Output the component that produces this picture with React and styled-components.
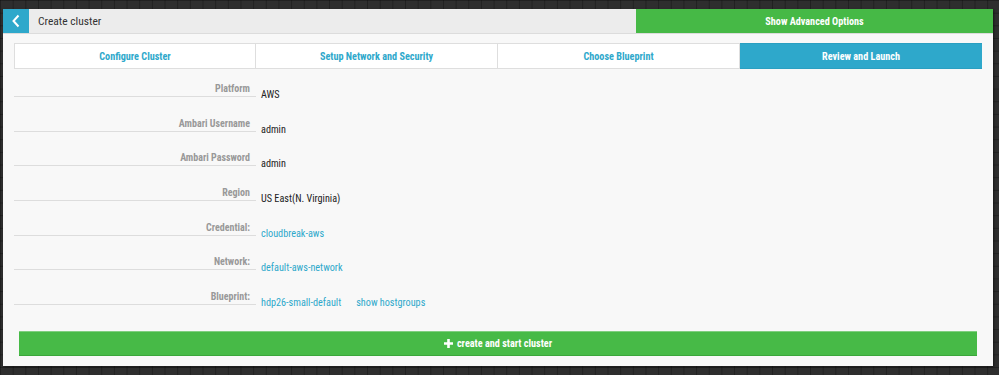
import React from "react";
import styled, { createGlobalStyle } from "styled-components";

const FONT = `"Roboto Condensed", "Liberation Sans Narrow", "Arial Narrow", "DejaVu Sans Condensed", Roboto, sans-serif`;

const Global = createGlobalStyle`
  html, body {
    margin: 0;
    padding: 0;
    width: 999px;
    height: 375px;
    overflow: hidden;
    background-color: #2e2e2e;
    background-image:
      linear-gradient(to right, rgba(0,0,0,0.28) 1px, transparent 1px),
      linear-gradient(to bottom, rgba(0,0,0,0.28) 1px, transparent 1px);
    background-size: 12.67px 12.67px;
    font-family: ${FONT};
  }
`;

const Panel = styled.div`
  margin: 9px 0 0 3px;
  width: 990px;
  height: 357px;
  background: #f8f8f8;
  box-shadow: 1px 1px 2px rgba(0,0,0,0.5);
  display: flex;
  flex-direction: column;
  box-sizing: border-box;
`;

const Header = styled.div`
  display: flex;
  height: 25px;
  background: #ececec;
  border-bottom: 1px solid #dcdcdc;
  box-sizing: border-box;
`;

const BackButton = styled.div`
  width: 26px;
  background: #2ea8cb;
  display: flex;
  align-items: center;
  justify-content: center;
`;

const Title = styled.div`
  flex: 1;
  display: flex;
  align-items: center;
  padding-left: 9px;
  font-size: 11.5px;
  color: #333;
`;

const AdvancedButton = styled.div`
  width: 357px;
  background: #46b946;
  color: #fff;
  font-weight: bold;
  font-size: 10.2px;
  display: flex;
  align-items: center;
  justify-content: center;
`;

const Body = styled.div`
  padding: 9px 11px 10px 11px;
  display: flex;
  flex-direction: column;
  flex: 1;
`;

const Tabs = styled.div`
  display: grid;
  grid-template-columns: repeat(4, 1fr);
  height: 26px;
`;

const Tab = styled.div`
  display: flex;
  align-items: center;
  justify-content: center;
  font-size: 10.2px;
  font-weight: bold;
  color: ${(p) => (p.$active ? "#fff" : "#2ea8cb")};
  background: ${(p) => (p.$active ? "#2ea8cb" : "#fff")};
  border: 1px solid ${(p) => (p.$active ? "#2a9fc1" : "#dedede")};
  border-left-width: ${(p) => (p.$first ? "1px" : "0")};
  border-right-width: ${(p) => (p.$active ? "0" : "1px")};
`;

const Rows = styled.div`
  display: flex;
  flex-direction: column;
  gap: 5.67px;
  margin-top: -1px;
`;

const Row = styled.div`
  display: grid;
  grid-template-columns: 242px 1fr;
  align-items: end;
  height: 29px;
`;

const Label = styled.div`
  border-bottom: 1px solid #dddddd;
  text-align: right;
  padding: 0 6px 1px 0;
  font-size: 10px;
  line-height: 12px;
  font-weight: bold;
  color: #999;
`;

const Value = styled.div`
  display: flex;
  gap: 15px;
  padding-left: 5px;
  margin-bottom: -5px;
  font-size: 10.2px;
  line-height: 14px;
  color: #222;
`;

const Link = styled.span`
  color: #2ea8cb;
`;

const CreateButton = styled.div`
  margin: auto 5px 0 5px;
  height: 25px;
  box-sizing: border-box;
  background: #47ba47;
  border-top: 1px solid #7fcf7f;
  border-bottom: 1px solid #3aa63a;
  color: #fff;
  font-weight: bold;
  font-size: 10.2px;
  display: flex;
  align-items: center;
  justify-content: center;
  gap: 4px;
`;

const rows = [
  { label: "Platform", value: "AWS" },
  { label: "Ambari Username", value: "admin" },
  { label: "Ambari Password", value: "admin" },
  { label: "Region", value: "US East(N. Virginia)" },
  { label: "Credential:", links: ["cloudbreak-aws"] },
  { label: "Network:", links: ["default-aws-network"] },
  { label: "Blueprint:", links: ["hdp26-small-default", "show hostgroups"] },
];

const tabs = ["Configure Cluster", "Setup Network and Security", "Choose Blueprint", "Review and Launch"];

export default function App() {
  return (
    <>
      <Global />
      <Panel>
        <Header>
          <BackButton>
            <svg width="10" height="14" viewBox="0 0 10 14">
              <path d="M7.5 1.5 L2.5 7 L7.5 12.5" fill="none" stroke="#fff" strokeWidth="2" />
            </svg>
          </BackButton>
          <Title>Create cluster</Title>
          <AdvancedButton>Show Advanced Options</AdvancedButton>
        </Header>
        <Body>
          <Tabs>
            {tabs.map((t, i) => (
              <Tab key={t} $first={i === 0} $active={i === 3}>{t}</Tab>
            ))}
          </Tabs>
          <Rows>
            {rows.map((r) => (
              <Row key={r.label}>
                <Label>{r.label}</Label>
                <Value>
                  {r.value}
                  {r.links && r.links.map((l) => <Link key={l}>{l}</Link>)}
                </Value>
              </Row>
            ))}
          </Rows>
          <CreateButton>
            <svg width="9" height="9" viewBox="0 0 9 9">
              <path d="M3.2 0h2.6v3.2H9v2.6H5.8V9H3.2V5.8H0V3.2h3.2z" fill="#fff" />
            </svg>
            create and start cluster
          </CreateButton>
        </Body>
      </Panel>
    </>
  );
}
